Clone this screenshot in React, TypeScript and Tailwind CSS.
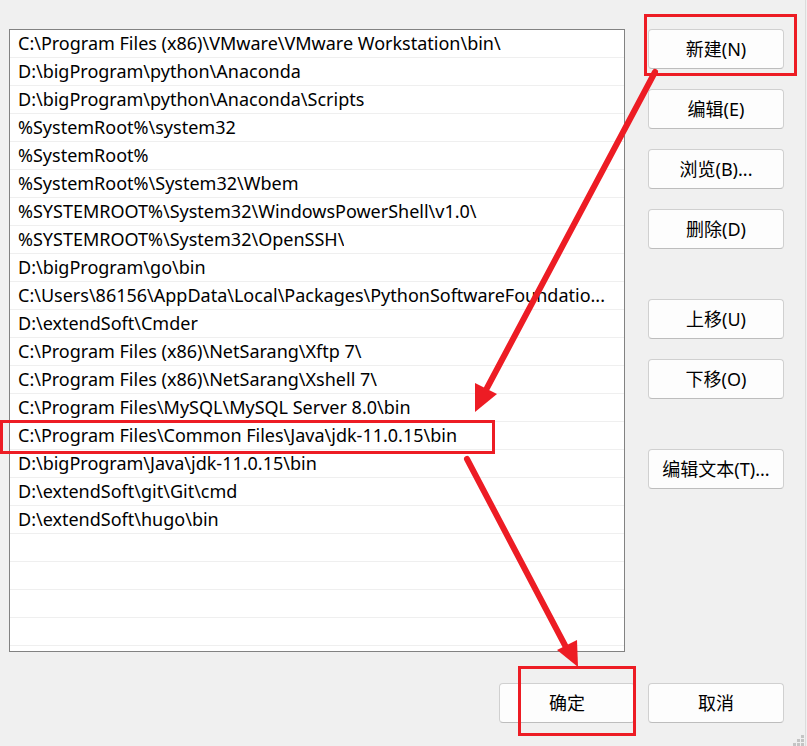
import React from "react";

const items: string[] = [
  String.raw`C:\Program Files (x86)\VMware\VMware Workstation\bin\ `.trim(),
  String.raw`D:\bigProgram\python\Anaconda`,
  String.raw`D:\bigProgram\python\Anaconda\Scripts`,
  String.raw`%SystemRoot%\system32`,
  String.raw`%SystemRoot%`,
  String.raw`%SystemRoot%\System32\Wbem`,
  String.raw`%SYSTEMROOT%\System32\WindowsPowerShell\v1.0\ `.trim(),
  String.raw`%SYSTEMROOT%\System32\OpenSSH\ `.trim(),
  String.raw`D:\bigProgram\go\bin`,
  String.raw`C:\Users\86156\AppData\Local\Packages\PythonSoftwareFoundatio...`,
  String.raw`D:\extendSoft\Cmder`,
  String.raw`C:\Program Files (x86)\NetSarang\Xftp 7\ `.trim(),
  String.raw`C:\Program Files (x86)\NetSarang\Xshell 7\ `.trim(),
  String.raw`C:\Program Files\MySQL\MySQL Server 8.0\bin`,
  String.raw`C:\Program Files\Common Files\Java\jdk-11.0.15\bin`,
  String.raw`D:\bigProgram\Java\jdk-11.0.15\bin`,
  String.raw`D:\extendSoft\git\Git\cmd`,
  String.raw`D:\extendSoft\hugo\bin`,
];

const rows = [...items, "", "", "", ""];

function Btn({ children }: { children: React.ReactNode }) {
  return (
    <button className="w-[136px] h-[40px] rounded-[4px] border border-[#d0d0d0] border-b-[#bdbdbd] bg-[#fdfdfd] text-[18px] text-black flex items-center justify-center leading-none">
      {children}
    </button>
  );
}

export default function App() {
  return (
    <div
      className="relative w-[807px] h-[746px] bg-[#f0f0f0] overflow-hidden"
      style={{ fontFamily: '"Noto Sans", "Noto Sans CJK SC", sans-serif' }}
    >
      <div className="absolute top-0 bottom-0 left-[805px] w-px bg-[#dcdcdc]" />
      <div className="flex flex-col pl-[9px] pt-[29px]">
        <div className="flex gap-[23px]">
          <div className="w-[616px] h-[623px] border border-[#828282] bg-white overflow-hidden">
            {rows.map((r, i) => (
              <div
                key={i}
                className="h-[28px] border-b border-[#efefef] pl-[8px] pr-[2px] flex items-center text-[18px] text-black whitespace-nowrap overflow-hidden"
              >
                <span className="truncate">{r}</span>
              </div>
            ))}
          </div>
          <div className="flex flex-col">
            <Btn>新建(N)</Btn>
            <div className="h-[20px]" />
            <Btn>编辑(E)</Btn>
            <div className="h-[20px]" />
            <Btn>浏览(B)...</Btn>
            <div className="h-[20px]" />
            <Btn>删除(D)</Btn>
            <div className="h-[50px]" />
            <Btn>上移(U)</Btn>
            <div className="h-[20px]" />
            <Btn>下移(O)</Btn>
            <div className="h-[50px]" />
            <Btn>编辑文本(T)...</Btn>
          </div>
        </div>
        <div className="flex justify-end gap-[13px] pr-[23px] mt-[31px]">
          <Btn>确定</Btn>
          <Btn>取消</Btn>
        </div>
      </div>

      {/* resize grip */}
      <div className="absolute left-[801px] top-[735px] w-[3px] h-[3px] bg-[#c4c4c4]" />
      <div className="absolute left-[797px] top-[739px] w-[3px] h-[3px] bg-[#c4c4c4]" />
      <div className="absolute left-[801px] top-[739px] w-[3px] h-[3px] bg-[#c4c4c4]" />
      <div className="absolute left-[793px] top-[743px] w-[3px] h-[3px] bg-[#c4c4c4]" />
      <div className="absolute left-[797px] top-[743px] w-[3px] h-[3px] bg-[#c4c4c4]" />
      <div className="absolute left-[801px] top-[743px] w-[3px] h-[3px] bg-[#c4c4c4]" />

      {/* annotations */}
      <svg className="absolute inset-0 pointer-events-none" width="807" height="746" viewBox="0 0 807 746">
        <g fill="none" stroke="#ed1c24" strokeWidth="3">
          <rect x="645.5" y="15.5" width="150" height="59" />
          <rect x="1.5" y="421.5" width="492" height="31" />
          <rect x="519.5" y="667.5" width="115" height="67" />
        </g>
        <g stroke="#ed1c24" strokeWidth="6" strokeLinecap="round">
          <line x1="655" y1="72" x2="487" y2="388" />
          <line x1="467" y1="459" x2="568" y2="651" />
        </g>
        <g fill="#ed1c24">
          <polygon points="475,412 475,383 497,394" />
          <polygon points="578,667 557,650 577,640" />
        </g>
      </svg>
    </div>
  );
}
